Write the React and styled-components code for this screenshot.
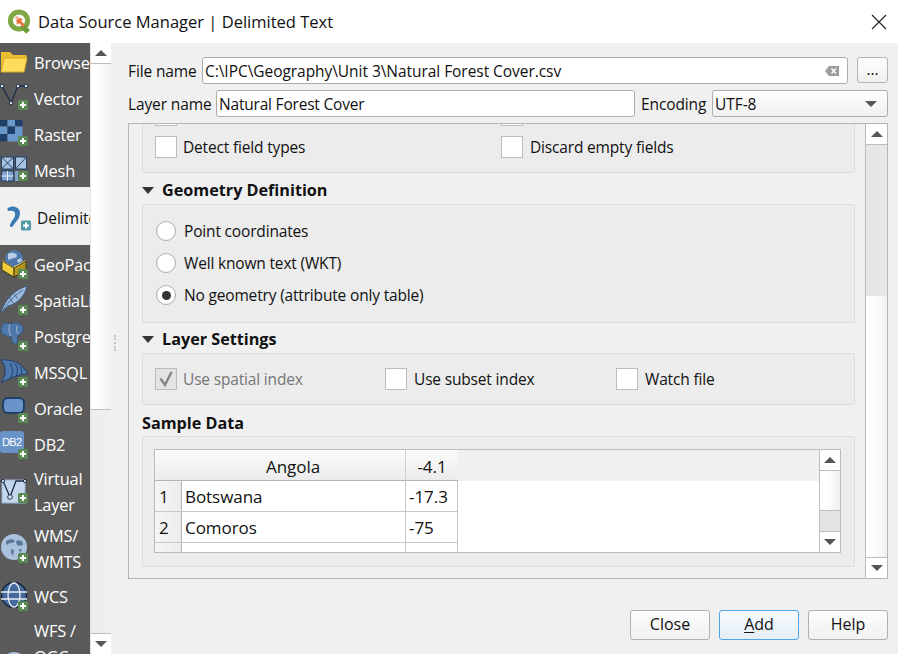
import React from "react";
import styled, { createGlobalStyle } from "styled-components";

const Global = createGlobalStyle`
  html, body { margin: 0; padding: 0; background: #f0f0f0; }
  * { box-sizing: border-box; }
`;
const FONT = `"Open Sans", "Noto Sans", "Liberation Sans", sans-serif`;

const Window = styled.div`
  width: 898px; height: 654px; display: flex; flex-direction: column; overflow: hidden;
  background: #f0f0f0; font-family: ${FONT}; font-size: 15.5px; letter-spacing: -0.05px; color: #111;
`;
const TitleBar = styled.header`
  height: 43px; flex: none; display: flex; align-items: center; background: #fff; padding: 0 11px 0 7px; gap: 6px;
`;
const TitleText = styled.div` flex: 1; font-size: 16.5px; letter-spacing: 0; color: #111; `;
const Body = styled.div` flex: 1; min-height: 0; display: flex; `;
const Sidebar = styled.nav`
  width: 90px; flex: none; background: #5a5a5a; overflow: hidden; padding-top: 2px; display: flex; flex-direction: column;
`;
const SideItem = styled.div`
  flex: none; display: flex; align-items: center; gap: 4px; overflow: hidden; white-space: nowrap;
  height: ${p => p.$h || 36}px; margin-bottom: ${p => p.$mb || 0}px; padding-top: ${p => p.$pt || 0}px;
  background: ${p => p.$active ? "#f0f0f0" : "transparent"};
  color: ${p => p.$active ? "#111" : "#fff"};
  padding-left: ${p => p.$active ? 5 : 0}px;
  font-size: ${p => p.$active ? 15.5 : 16.4}px; line-height: 26px; letter-spacing: ${p => p.$active ? 0 : -0.2}px;
  & > svg { flex: none; }
`;
const LowerIcon = styled.div` flex: none; width: 30px; height: 30px; margin-top: 46px; `;
const SideScroll = styled.div`
  width: 21px; flex: none; display: flex; flex-direction: column; background: #eeeeee; border-left: 1px solid #e4e4e4;
`;
const ArrowBtn = styled.div`
  height: ${p => p.$h ? p.$h + "px" : "auto"}; flex: ${p => p.$h ? "none" : 1}; display: flex; align-items: center; justify-content: center;
  background: #fff;
  ${p => p.$top ? "border-bottom: 1px solid #bdbdbd;" : ""}
  ${p => p.$bottom ? "border-top: 1px solid #bdbdbd;" : ""}
`;
const Tri = styled.div`
  width: 0; height: 0; border-left: 6px solid transparent; border-right: 6px solid transparent;
  ${p => p.$up ? "border-bottom: 6px solid #555;" : "border-top: 6px solid #555;"}
`;
const Thumb = styled.div`
  height: ${p => p.$h}px; flex: none; background: linear-gradient(90deg, #fff 30%, #f0f0f0);
  ${p => p.$line ? "border-bottom: 1px solid #bdbdbd;" : ""}
`;
const Track = styled.div` flex: ${p => p.$h ? "none" : 1}; height: ${p => p.$h ? p.$h + "px" : "auto"}; background: ${p => p.$bg || "#e6e6e6"}; `;
const Splitter = styled.div`
  width: 17px; flex: none; display: flex; align-items: center; padding-left: 3px; padding-bottom: 12px;
`;
const Dots = styled.div` height: 16px; border-left: 2px dotted #c4c4c4; `;
const Main = styled.main` flex: 1; min-width: 0; display: flex; flex-direction: column; padding: 14px 10px 14px 0; `;
const FieldRow = styled.div` display: flex; align-items: center; height: 27px; margin-bottom: 6px; gap: 6px; `;
const Label = styled.label` width: ${p => p.$w}px; flex: none; white-space: nowrap; letter-spacing: -0.12px; `;
const TextBox = styled.div`
  flex: ${p => p.$w ? "none" : 1}; width: ${p => p.$w ? p.$w + "px" : "auto"}; height: 27px; background: #fff;
  border: 1px solid #adadad; border-radius: 3px; display: flex; align-items: center; justify-content: space-between;
  padding: 0 8px 0 2px; white-space: nowrap; letter-spacing: ${p => p.$tight ? "-0.2px" : "-0.05px"};
`;
const DotsBtn = styled.button`
  width: 31px; height: 26px; margin: 0 0 1px 3px; padding: 0 0 6px; border: 1px solid #b4b4b4; border-radius: 3px; font: inherit; color: #111;
  background: linear-gradient(#fdfdfd, #f0f0f0);
`;
const Select = styled(TextBox)`
  background: linear-gradient(#fff, #f0f0f0); padding-right: 10px;
`;
const ScrollArea = styled.section`
  flex: none; height: 456px; border: 1px solid #b6b6b6; display: flex; overflow: hidden;
`;
const Content = styled.div` flex: 1; min-width: 0; overflow: hidden; padding: 0 10px 0 13px; `;
const Group = styled.div`
  border: 1px solid #dcdcdc; background: #ececec; border-radius: 2px;
  height: ${p => p.$h}px; padding: ${p => p.$pt}px 12px 0 ${p => p.$pl ?? 12}px; margin-top: ${p => p.$mt || 0}px;
`;
const Grid = styled.div`
  display: grid; grid-template-columns: ${p => p.$cols}; row-gap: 10px;
`;
const Stack = styled.div` display: flex; flex-direction: column; gap: 10px; `;
const Check = styled.div` display: flex; align-items: center; gap: ${p => p.$gap || 6}px; height: 22px; color: ${p => p.$off ? "#777" : "#111"}; white-space: nowrap; `;
const Caption = styled.span` padding-bottom: 1px; letter-spacing: -0.17px; `;
const Box = styled.div`
  width: 22px; height: 22px; flex: none; background: ${p => p.$off ? "#e4e4e4" : "#fff"}; border: 1px solid #bcbcbc; display: flex; align-items: center; justify-content: center;
`;
const Radio = styled.div`
  width: 20px; height: 20px; margin: 0 8px 0 1px; flex: none; border-radius: 50%; background: #fff; border: 1px solid #adadad; display: flex; align-items: center; justify-content: center;
  &::after { content: ""; width: 9px; height: 9px; border-radius: 50%; background: ${p => p.$on ? "#333" : "transparent"}; }
`;
const RadioRow = styled.div` display: flex; align-items: center; height: 22px; white-space: nowrap; `;
const Heading = styled.h3`
  margin: 0; height: ${p => p.$h}px; display: flex; align-items: center; gap: 8px; font-size: 16.2px; font-weight: 700; letter-spacing: 0; padding-top: ${p => p.$pt}px;
`;
const Caret = styled.div`
  width: 0; height: 0; border-left: 6px solid transparent; border-right: 6px solid transparent; border-top: 7px solid #333;
`;
const Table = styled.div`
  height: 104px; border: 1px solid #bcbcbc; display: flex; overflow: hidden; background: #fff; width: 687px; font-size: 17px;
`;
const TableBody = styled.div` flex: 1; min-width: 0; `;
const HeaderRow = styled.div` height: 31px; display: flex; background: #f0f0f0; `;
const HCell = styled.div`
  width: ${p => p.$w}px; height: 31px; display: flex; align-items: center; justify-content: center; flex: none; padding: 2px 0 0 ${p => p.$pl || 0}px;
  background: linear-gradient(#fbfbfb, #ececec); border-bottom: 1px solid #b4b4b4; border-right: ${p => p.$last ? "none" : "1px solid #cfcfcf"};
`;
const Row = styled.div` height: 31px; display: flex; border-bottom: 1px solid #c8c8c8; width: 303px; background: #fff; border-right: 1px solid #c8c8c8; `;
const RowHead = styled.div`
  width: 27px; flex: none; padding-left: 4px; background: linear-gradient(90deg, #f6f6f6, #ececec); border-right: 1px solid #b4b4b4; display: flex; align-items: center;
`;
const Cell = styled.div`
  width: ${p => p.$w}px; flex: none; display: flex; align-items: center; padding-left: 3px; border-right: ${p => p.$last ? "none" : "1px solid #c8c8c8"};
`;
const VScroll = styled.div`
  width: ${p => p.$w}px; flex: none; display: flex; flex-direction: column; border-left: 1px solid #bcbcbc; ${p => p.$outer ? "background:#e6e6e6;" : ""}
`;
const Footer = styled.footer` display: flex; justify-content: flex-end; gap: 9px; margin-top: 31px; `;
const Btn = styled.button`
  width: 80px; height: 30px; padding: 0 0 2px; font: inherit; font-size: 16px; color: #111; border-radius: 3px;
  border: 1px solid ${p => p.$primary ? "#4ea6ea" : "#b0b0b0"};
  background: ${p => p.$primary ? "linear-gradient(#f7fbfe, #e4eef6)" : "linear-gradient(#fdfdfd, #f0f0f0)"};
  & u { text-underline-offset: 2px; }
`;

const Badge = ({ x = 23, y = 21, c = "#5a8a54" }) => (
  <g>
    <rect x={x - 5} y={y - 5} width="10" height="10" rx="1.5" fill={c} />
    <path d={`M${x - 3} ${y}h6M${x} ${y - 3}v6`} stroke="#fff" strokeWidth="2" />
  </g>
);
const Ico = ({ children, w = 30 }) => <svg width={w} height="30" viewBox={`0 0 ${w} 30`}>{children}</svg>;

const IFolder = () => <Ico>
  <path d="M1 4 h9 l3 3 h13 l1 2 -3 15 H1 Z" fill="#e9bf2f" />
  <path d="M4 10 H27 L24 24 H1 Z" fill="#ffdc5c" stroke="#d7ab25" strokeWidth="1" />
</Ico>;
const IVector = () => <Ico>
  <path d="M2 2 L11 19 L18 2 H26" fill="none" stroke="#1d2f4c" strokeWidth="1.3" />
  {[[2, 2], [11, 19], [18, 2], [26, 2]].map(([x, y]) => <circle key={x} cx={x} cy={y} r="1.8" fill="#dfe6ef" stroke="#1d2f4c" />)}
  <Badge />
</Ico>;
const IRaster = () => <Ico>
  {[[0, 0, 1], [7.5, 0, 0], [15, 0, 1], [0, 7.5, 0], [7.5, 7.5, 1], [15, 7.5, 0], [0, 15, 1], [7.5, 15, 0], [15, 15, 0]].map(([x, y, d]) =>
    <rect key={`${x}${y}`} x={x} y={y - 1} width="7.5" height="7.5" fill={d ? "#1f3f69" : "#6b98cc"} />)}
  <Badge />
</Ico>;
const IMesh = () => <Ico>
  <rect x="1.5" y="1" width="12" height="12" fill="#a9c3e0" stroke="#1f3f69" />
  <path d="M1.5 1L13.5 13M13.5 1L1.5 13" stroke="#1f3f69" />
  <rect x="15.5" y="1" width="11" height="12" fill="#a9c3e0" stroke="#1f3f69" />
  <path d="M15.5 13L26.5 1" stroke="#1f3f69" />
  <rect x="1.5" y="15" width="12" height="10" fill="#7ea3cf" stroke="#1f3f69" />
  <path d="M1.5 20H13.5M7.5 15V25" stroke="#e7eef7" />
  <rect x="15" y="15" width="6" height="10" fill="#7ea3cf" />
  <Badge y={20} />
</Ico>;
const IDelim = () => <Ico w={28}>
  <path d="M3 5 C6 2 15 3 15 10 C15 16 10 19 8 23 C7 25 4.5 24 5 22 C6.5 17 11 15 10 10 C9.5 7.5 6 7.5 4 8 C2.5 8.5 2 6 3 5Z" fill="#3a7ab4" />
  <Badge x={21} y={22.5} c="#4f9aa6" />
</Ico>;
const IGeo = () => <Ico>
  <circle cx="14" cy="9" r="9" fill="#4f77ac" />
  <path d="M8 4c3-2 6-1 8 0s1 4-2 4-4 3-6 1zM17 10l4-2 1 3-4 2z" fill="#b9cde4" />
  <path d="M2 10 L13 17 L26 10 V12 L13 20 L2 13Z" fill="#ffe98a" />
  <path d="M2 11 L14 18 V27 L2 20 Z" fill="#f2cf3c" stroke="#3c3410" strokeWidth=".9" />
  <path d="M14 18 L26 11 V20 L14 27 Z" fill="#b3931f" stroke="#3c3410" strokeWidth=".9" />
  <Badge y={24} />
</Ico>;
const ISpatia = () => <Ico>
  <path d="M1 26 C5 14 14 4 27 0 C25 9 19 17 8 20 L3 25Z" fill="#9fbbdc" stroke="#2e527f" strokeWidth=".8" />
  <path d="M3 24 C9 15 15 9 23 4M10 12l3 5M14 8l4 5" stroke="#2e527f" fill="none" strokeWidth=".8" />
  <Badge y={24} />
</Ico>;
const IPg = () => <Ico>
  <path d="M1 7 C1 1 6 0 10 2 C14 0 22 0 23 6 C24 11 20 12 18 14 L17 21 C15 23 13 22 12 19 L11 14 C9 16 7 15 6 13 C3 14 1 11 1 7Z" fill="#4f78aa" stroke="#2e527f" strokeWidth=".8" />
  <path d="M10 2 C8 7 9 10 11 14M17 4c-1 3 0 6 1 8" stroke="#b9cde4" fill="none" strokeWidth=".8" />
  <Badge y={24} />
</Ico>;
const IMssql = () => <Ico>
  <path d="M1 2 C12 1 22 5 28 16 C20 16 10 20 1 25 C6 17 7 9 1 2Z" fill="#4d78ad" stroke="#1f3f69" />
  <path d="M10 5 C13 10 13 14 11 20M15 6 C18 10 18 13 16 18M20 9c2 2 2 5 1 7" stroke="#1f3f69" fill="none" />
  <Badge y={24} />
</Ico>;
const IOracle = () => <Ico>
  <rect x="3" y="4" width="21" height="15" rx="5" fill="#6a94c9" stroke="#1f3f69" strokeWidth="2" />
  <Badge y={24} />
</Ico>;
const IDb2 = () => <Ico>
  <rect x="0" y="1" width="24" height="22" rx="3" fill="#6a94c9" />
  <text x="12" y="16" fontSize="11" fill="#fff" fontFamily="Liberation Sans, sans-serif" textAnchor="middle" textLength="20">DB2</text>
  <Badge y={24} />
</Ico>;
const IVirtual = () => <Ico>
  <rect x="2" y="3" width="23" height="23" fill="#c3d6ec" stroke="#9db6d3" />
  <path d="M3 4 L10 20 L16 4 H25" fill="none" stroke="#1d2f4c" strokeWidth="1.3" />
  <circle cx="10" cy="20" r="2.3" fill="#dfe6ef" stroke="#1d2f4c" />
  <circle cx="3" cy="4" r="1.6" fill="#dfe6ef" stroke="#1d2f4c" />
  <circle cx="25" cy="4" r="1.6" fill="#dfe6ef" stroke="#1d2f4c" />
  <Badge y={21} />
</Ico>;
const IWms = () => <Ico>
  <circle cx="14" cy="13" r="13" fill="#a9c1dd" />
  <path d="M6 7c3-2 6-2 8-1s0 3-3 3-3 3-5 1zM17 6l5 1 1 4-5 1-2-3zM11 15l3 1-1 6-2-3zM19 15h3l-2 4z" fill="#5d7899" />
  <Badge x={23} y={24} />
</Ico>;
const IWcs = () => <Ico>
  <circle cx="14" cy="13" r="12.5" fill="#45699c" stroke="#17263f" strokeWidth="1.5" />
  <path d="M1 10H27M1 17H27" stroke="#e9eef5" strokeWidth="1.3" />
  <ellipse cx="14" cy="13" rx="6" ry="12" fill="none" stroke="#e9eef5" strokeWidth="1.3" />
  <Badge y={24} />
</Ico>;

const CheckMark = () => <svg width="18" height="18" viewBox="0 0 18 18"><path d="M3.5 8.5L8 15L14.5 2" fill="none" stroke="#858585" strokeWidth="2.4" /></svg>;

const Logo = () => <svg width="25" height="25" viewBox="0 0 25 25">
  <circle cx="12" cy="11.5" r="8.6" fill="none" stroke="#7da843" strokeWidth="5" />
  <path d="M15 16L21 23" stroke="#6f9b3a" strokeWidth="5" />
  <path d="M9 8l7 2-2 2 4 4-2 2-4-4-2 2z" fill="#e8743b" />
  <circle cx="10" cy="9" r="2" fill="#f5b5a0" />
</svg>;
const ClearIcon = () => <svg width="14" height="12" viewBox="0 0 14 12"><path d="M4 1H14V11H4L0 6Z" fill="#9c9c9c" /><path d="M6.5 3.5L11 8.5M11 3.5L6.5 8.5" stroke="#fff" strokeWidth="1.5" /></svg>;
const CloseIcon = () => <svg width="16" height="16" viewBox="0 0 16 16"><path d="M1 1L15 15M15 1L1 15" stroke="#222" strokeWidth="1.1" /></svg>;

const items = [[IFolder, "Browser"], [IVector, "Vector"], [IRaster, "Raster"]];
const items2 = [
  [IGeo, "GeoPackage"], [ISpatia, "SpatiaLite"], [IPg, "PostgreSQL"], [IMssql, "MSSQL"], [IOracle, "Oracle"], [IDb2, "DB2"],
];

export default function App() {
  return (
    <Window>
      <Global />
      <TitleBar>
        <Logo />
        <TitleText>Data Source Manager | Delimited Text</TitleText>
        <CloseIcon />
      </TitleBar>
      <Body>
        <Sidebar>
          {items.map(([I, t]) => <SideItem key={t}><I />{t}</SideItem>)}
          <SideItem $h={34} $pt={2}><IMesh />Mesh</SideItem>
          <SideItem $active $h={58} $mb={2} $pt={3}><IDelim />Delimited Text</SideItem>
          {items2.map(([I, t]) => <SideItem key={t}><I />{t}</SideItem>)}
          <SideItem $h={57}><IVirtual /><span>Virtual<br />Layer</span></SideItem>
          <SideItem $h={58}><IWms /><span>WMS/<br />WMTS</span></SideItem>
          <SideItem $h={37}><IWcs /><span>WCS</span></SideItem>
          <SideItem $h={58}><LowerIcon><IWms /></LowerIcon><span>WFS /<br />OGC</span></SideItem>
        </Sidebar>
        <SideScroll>
          <ArrowBtn $h={21} $top><Tri $up /></ArrowBtn>
          <Thumb $h={346} $line />
          <Track $bg="#eeeeee" />
          <ArrowBtn $h={21} $bottom><Tri /></ArrowBtn>
        </SideScroll>
        <Splitter><Dots /></Splitter>
        <Main>
          <FieldRow>
            <Label $w={68}>File name</Label>
            <TextBox>C:\IPC\Geography\Unit 3\Natural Forest Cover.csv<ClearIcon /></TextBox>
            <DotsBtn>...</DotsBtn>
          </FieldRow>
          <FieldRow>
            <Label $w={82}>Layer name</Label>
            <TextBox $w={419} $tight>Natural Forest Cover</TextBox>
            <Label $w={65}>Encoding</Label>
            <Select>UTF-8<Tri /></Select>
          </FieldRow>
          <ScrollArea>
            <Content>
              <Group $h={83} $pt={13} $mt={-34}>
                <Grid $cols="346px 1fr">
                  <Check><Box /></Check>
                  <Check><Box /></Check>
                  <Check><Box /><Caption>Detect field types</Caption></Check>
                  <Check $gap={7}><Box /><Caption>Discard empty fields</Caption></Check>
                </Grid>
              </Group>
              <Heading $h={31} $pt={3}><Caret />Geometry Definition</Heading>
              <Group $h={119} $pt={15}>
                <Stack>
                  <RadioRow><Radio /><Caption>Point coordinates</Caption></RadioRow>
                  <RadioRow><Radio /><Caption>Well known text (WKT)</Caption></RadioRow>
                  <RadioRow><Radio $on /><Caption>No geometry (attribute only table)</Caption></RadioRow>
                </Stack>
              </Group>
              <Heading $h={30} $pt={2}><Caret />Layer Settings</Heading>
              <Group $h={52} $pt={14}>
                <Grid $cols="230px 231px 1fr">
                  <Check $off><Box $off><CheckMark /></Box><Caption>Use spatial index</Caption></Check>
                  <Check $gap={7}><Box /><Caption>Use subset index</Caption></Check>
                  <Check $gap={7}><Box /><Caption>Watch file</Caption></Check>
                </Grid>
              </Group>
              <Heading $h={31} $pt={4}>Sample Data</Heading>
              <Group $h={131} $pt={12} $pl={11}>
                <Table>
                  <TableBody>
                    <HeaderRow>
                      <HCell $w={251} $pl={26}>Angola</HCell>
                      <HCell $w={52} $last>-4.1</HCell>
                    </HeaderRow>
                    <Row><RowHead>1</RowHead><Cell $w={224}>Botswana</Cell><Cell $w={51} $last>-17.3</Cell></Row>
                    <Row><RowHead>2</RowHead><Cell $w={224}>Comoros</Cell><Cell $w={51} $last>-75</Cell></Row>
                    <Row><RowHead /><Cell $w={224} /><Cell $w={51} $last /></Row>
                  </TableBody>
                  <VScroll $w={21}>
                    <ArrowBtn $h={21} $top><Tri $up /></ArrowBtn>
                    <Thumb $h={40} $line />
                    <Track $h={20} $bg="#e4e4e4" />
                    <ArrowBtn $bottom><Tri /></ArrowBtn>
                  </VScroll>
                </Table>
              </Group>
            </Content>
            <VScroll $w={22} $outer>
              <ArrowBtn $h={21} $top><Tri $up /></ArrowBtn>
              <Track $h={151} />
              <Thumb $h={261} />
              <ArrowBtn $bottom><Tri /></ArrowBtn>
            </VScroll>
          </ScrollArea>
          <Footer>
            <Btn>Close</Btn>
            <Btn $primary><u>A</u>dd</Btn>
            <Btn>Help</Btn>
          </Footer>
        </Main>
      </Body>
    </Window>
  );
}
